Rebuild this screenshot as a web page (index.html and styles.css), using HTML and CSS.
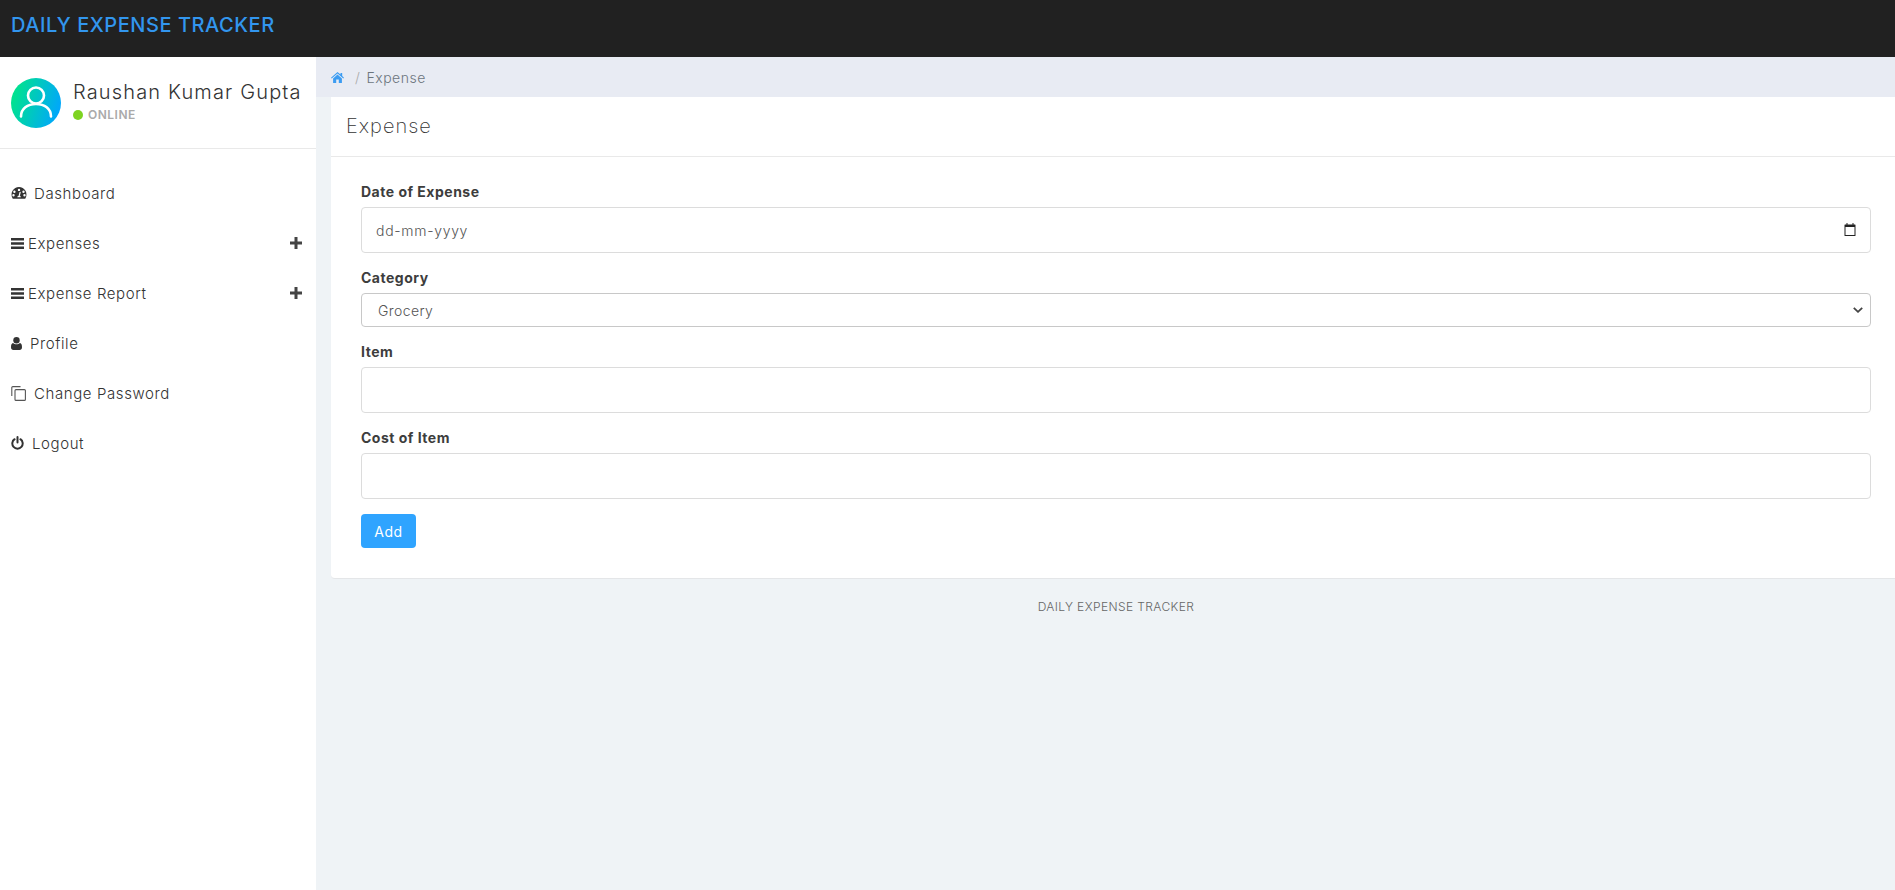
FILE: index.html
```html
<!DOCTYPE html>
<html lang="en">
<head>
  <meta charset="UTF-8" />
  <title>Daily Expense Tracker</title>
  <link rel="stylesheet" href="styles.css">
</head>
<body>

  <header class="topbar">
    <a class="brand" href="#">DAILY EXPENSE TRACKER</a>
  </header>

  <div class="page">
    <aside class="sidebar">
      <div class="user-panel">
        <svg class="avatar" viewBox="0 0 50 50">
          <defs>
            <linearGradient id="avatarGrad" x1="0" y1="0.35" x2="1" y2="0.65">
              <stop offset="0" stop-color="#00e58a" />
              <stop offset="1" stop-color="#00a5ff" />
            </linearGradient>
          </defs>
          <circle cx="25" cy="25" r="25" fill="url(#avatarGrad)" />
          <circle cx="25" cy="17.500" r="8" fill="none" stroke="#fff" stroke-width="2.600" />
          <path d="M10 38.500c0-8 6.500-12.500 15-12.500s15 4.500 15 12.500" fill="none" stroke="#fff" stroke-width="2.600" stroke-linecap="round" />
        </svg>
        <div class="user-info">
          <div class="user-name">Raushan Kumar Gupta</div>
          <div class="user-status"><span class="status-dot"></span>ONLINE</div>
        </div>
      </div>

      <nav class="side-menu">
        <a href="#" class="menu-item">
          <svg class="icon icon-dash" viewBox="0 0 16 14"><path fill-rule="evenodd" d="M8 1a7.500 7.500 0 0 0-6.500 11.200c.2.400.5.600.9.600h11.200c.4 0 .7-.2.900-.6A7.500 7.500 0 0 0 8 1zM8 2.700a1.200 1.200 0 1 1 0 2.400 1.200 1.200 0 0 1 0-2.400zM3.400 4.600a1.200 1.200 0 1 1 0 2.400 1.200 1.200 0 0 1 0-2.400zM2.500 8a1.200 1.200 0 1 1 0 2.400 1.200 1.200 0 0 1 0-2.400zM13.500 8a1.200 1.200 0 1 1 0 2.400 1.200 1.200 0 0 1 0-2.400zM12.500 4.600a1.200 1.200 0 1 1 0 2.400 1.200 1.200 0 0 1 0-2.400zM8.800 10.100l.9-3.600c.1-.4-.1-.7-.4-.8-.4-.1-.7.100-.8.500l-.9 3.600c-.7.100-1.300.8-1.300 1.500h3.500c0-.700-.4-1.400-1-1.700z" /></svg>
          <span class="gap-dash">Dashboard</span>
        </a>
        <a href="#" class="menu-item">
          <svg class="icon icon-bars" viewBox="0 0 13 11"><path d="M0 0h13v2.400H0zM0 4.300h13v2.400H0zM0 8.600h13V11H0z" /></svg>
          <span class="gap-bars">Expenses</span>
          <svg class="icon-plus" viewBox="0 0 12 12"><path d="M4.500 0h3v4.500H12v3H7.500V12h-3V7.500H0v-3h4.500z" /></svg>
        </a>
        <a href="#" class="menu-item">
          <svg class="icon icon-bars" viewBox="0 0 13 11"><path d="M0 0h13v2.400H0zM0 4.300h13v2.400H0zM0 8.600h13V11H0z" /></svg>
          <span class="gap-bars">Expense Report</span>
          <svg class="icon-plus" viewBox="0 0 12 12"><path d="M4.500 0h3v4.500H12v3H7.500V12h-3V7.500H0v-3h4.500z" /></svg>
        </a>
        <a href="#" class="menu-item">
          <svg class="icon icon-user" viewBox="0 0 11 13"><circle cx="5.500" cy="3.300" r="3.200" /><path d="M2 6c1 .9 2.200 1.300 3.500 1.300S8 6.900 9 6c1.300.2 2 1.800 2 4.300 0 1.700-1 2.700-2.400 2.700H2.400C1 13 0 12 0 10.300 0 7.800.7 6.200 2 6z" /></svg>
          <span class="gap-user">Profile</span>
        </a>
        <a href="#" class="menu-item">
          <svg class="icon icon-copy" viewBox="0 0 15 15"><path d="M9.500.6H1.800a1 1 0 0 0-1 1v8.400M5 3.600h8.400a1 1 0 0 1 1 1v8.800a1 1 0 0 1-1 1H5a1 1 0 0 1-1-1V4.600a1 1 0 0 1 1-1z" fill="none" stroke="#555" stroke-width="1.100" /></svg>
          <span class="gap-copy">Change Password</span>
        </a>
        <a href="#" class="menu-item">
          <svg class="icon icon-power" viewBox="0 0 13 14"><path d="M3.600 3.200a5.200 5.200 0 1 0 5.800 0" fill="none" stroke="#333" stroke-width="2" stroke-linecap="round" /><path d="M6.500 1v5.600" fill="none" stroke="#333" stroke-width="2" stroke-linecap="round" /></svg>
          <span class="gap-power">Logout</span>
        </a>
      </nav>
    </aside>

    <main class="content">
      <div class="breadcrumb">
        <svg class="icon-home" viewBox="0 0 13 11"><path d="M6.500 0 9.500 2.600V1h1.700v3.100L13 5.700l-.7.800-5.800-5-5.800 5-.7-.8zM6.500 2.600l4.400 3.800V11H7.800V7.600H5.200V11H2.100V6.400z" /></svg>
        <span class="crumb-sep">/</span>
        <span class="crumb-text">Expense</span>
      </div>

      <div class="card-wrap">
        <section class="card">
          <h2 class="card-title">Expense</h2>
          <form class="card-body">
            <div class="form-group">
              <label class="form-label">Date of Expense</label>
              <div class="field">
                <input class="form-input" type="text" placeholder="dd-mm-yyyy">
                <svg class="icon-calendar" viewBox="0 0 12 13"><path d="M1 1.500h10a.5.500 0 0 1 .5.500v10.500a.5.500 0 0 1-.5.500H1a.5.500 0 0 1-.5-.5V2a.5.500 0 0 1 .5-.5zM1.500 4v8h9V4z" fill-rule="evenodd" /><path d="M2.500 0h1v2h-1zM8.500 0h1v2h-1z" /></svg>
              </div>
            </div>
            <div class="form-group">
              <label class="form-label">Category</label>
              <div class="field">
                <select class="form-select">
                  <option>Grocery</option>
                </select>
                <svg class="icon-chevron" viewBox="0 0 10 6"><path d="M.8.8 5 4.800 9.200.8" fill="none" stroke="#444" stroke-width="1.800" /></svg>
              </div>
            </div>
            <div class="form-group">
              <label class="form-label">Item</label>
              <input class="form-input" type="text">
            </div>
            <div class="form-group">
              <label class="form-label">Cost of Item</label>
              <input class="form-input" type="text">
            </div>
            <button class="btn-add" type="button">Add</button>
          </form>
        </section>
        <footer class="footer">DAILY EXPENSE TRACKER</footer>
      </div>
    </main>
  </div>

</body>
</html>
```

FILE: styles.css
```css
* {
  margin: 0;
  padding: 0;
  box-sizing: border-box;
}

html, body {
  width: 100%;
  height: 100%;
  overflow: hidden;
  font-family: 'Inter', 'Open Sans', sans-serif;
  font-size: 14px;
  color: #444;
  background: #eff3f6;
}

.topbar {
  height: 57px;
  background: #212121;
  padding: 13px 11px 0;
}

.brand {
  font-size: 20px;
  font-weight: 500;
  line-height: 24px;
  letter-spacing: 0.55px;
  color: #3296ee;
  text-decoration: none;
}

.page {
  display: flex;
  height: calc(100% - 57px);
}

.sidebar {
  width: 316px;
  flex: none;
  background: #fff;
}

.user-panel {
  display: flex;
  align-items: center;
  height: 92px;
  padding: 0 11px;
  border-bottom: 1px solid #e9e9e9;
}

.avatar {
  width: 50px;
  height: 50px;
  flex: none;
}

.user-info {
  margin-left: 12px;
  padding-bottom: 5px;
}

.user-name {
  font-size: 20px;
  font-weight: 300;
  line-height: 26px;
  letter-spacing: 1.15px;
  color: #333;
  white-space: nowrap;
}

.user-status {
  display: flex;
  align-items: center;
  margin-top: 3px;
  font-size: 12px;
  font-weight: 600;
  line-height: 14px;
  letter-spacing: 0.5px;
  color: #aaa;
}

.status-dot {
  width: 10px;
  height: 10px;
  margin-right: 5px;
  border-radius: 50%;
  background: #7ed321;
}

.side-menu {
  padding-top: 19px;
}

.menu-item {
  display: flex;
  align-items: center;
  height: 50px;
  padding: 0 14px 0 11px;
  font-size: 15px;
  font-weight: 300;
  letter-spacing: 0.6px;
  color: #333;
  text-decoration: none;
}

.icon {
  flex: none;
  fill: #333;
}

.icon-dash { width: 16px; height: 14px; }
.icon-bars { width: 13px; height: 11px; }
.icon-user { width: 11px; height: 13px; }
.icon-copy { width: 15px; height: 15px; }
.icon-power { width: 13px; height: 14px; }

.gap-dash { margin-left: 7px; }
.gap-bars { margin-left: 4px; }
.gap-user { margin-left: 8px; }
.gap-copy { margin-left: 8px; }
.gap-power { margin-left: 8px; }

.icon-plus {
  width: 12px;
  height: 12px;
  margin-left: auto;
  fill: #444;
}

.content {
  flex: 1;
  min-width: 0;
}

.breadcrumb {
  display: flex;
  align-items: center;
  height: 40px;
  padding-left: 15px;
  background: #e8ebf3;
  font-size: 14px;
  font-weight: 300;
  letter-spacing: 0.5px;
  color: #6c757d;
}

.icon-home {
  width: 13px;
  height: 11px;
  fill: #3b9cf2;
}

.crumb-sep {
  margin: 0 6px 0 11px;
  color: #aaa;
}

.card-wrap {
  width: 1570px;
  margin-left: 15px;
}

.card {
  background: #fff;
  border-bottom: 1px solid #e4e6e8;
  border-radius: 0 0 4px 4px;
}

.card-title {
  height: 60px;
  padding: 0 15px;
  border-bottom: 1px solid #e9e9e9;
  font-size: 20px;
  font-weight: 200;
  line-height: 59px;
  letter-spacing: 1px;
  color: #333;
}

.card-body {
  padding: 25px 30px 30px;
}

.form-group {
  margin-bottom: 15px;
}

.form-label {
  display: block;
  margin-bottom: 5px;
  font-size: 14px;
  font-weight: 700;
  line-height: 20px;
  letter-spacing: 0.5px;
  color: #3d3d3d;
}

.field {
  position: relative;
}

.form-input {
  display: block;
  width: 100%;
  height: 46px;
  padding: 0 14px;
  border: 1px solid #dcdcdc;
  border-radius: 4px;
  font: inherit;
  font-weight: 300;
  letter-spacing: 0.7px;
  color: #555;
  background: #fff;
}

.form-input::placeholder {
  color: #555;
  opacity: 1;
}

.icon-calendar {
  position: absolute;
  top: 16px;
  right: 15px;
  width: 12px;
  height: 13px;
  fill: #222;
}

.form-select {
  display: block;
  width: 100%;
  height: 34px;
  padding: 0 16px;
  border: 1px solid #c8c8c8;
  border-radius: 4px;
  appearance: none;
  font: inherit;
  font-weight: 300;
  letter-spacing: 0.4px;
  color: #555;
  background: #fff;
}

.icon-chevron {
  position: absolute;
  top: 14px;
  right: 8px;
  width: 10px;
  height: 6px;
  pointer-events: none;
}

.btn-add {
  display: block;
  width: 55px;
  height: 34px;
  border: none;
  border-radius: 4px;
  background: #2fa4ff;
  font: inherit;
  letter-spacing: 0.5px;
  color: #fff;
}

.footer {
  padding-top: 19px;
  font-size: 12px;
  font-weight: 300;
  line-height: 17px;
  letter-spacing: 0.4px;
  text-align: center;
  color: #666;
}
```
